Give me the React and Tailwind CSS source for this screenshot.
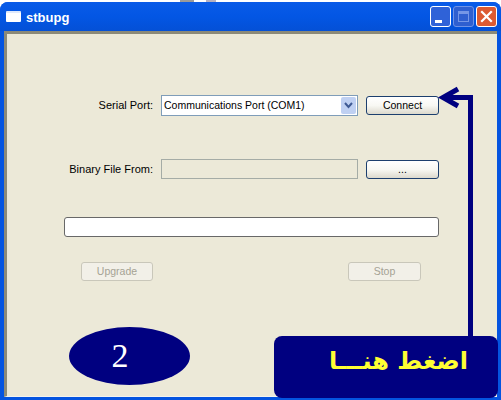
const uiFont = { fontFamily: '"Liberation Sans", sans-serif' }

function XpButton({ children, disabled, className = '' }) {
    return (
        <button
            disabled={disabled}
            className={`h-[19px] rounded-[3px] border text-[10.5px] leading-none ${
                disabled
                    ? 'border-[#c9c7ba] bg-[#f2f0e8] text-[#a5a294]'
                    : 'border-[#1c3f6e] bg-gradient-to-b from-white via-[#f8f8f3] to-[#dcd9cd] text-black'
            } ${className}`}
        >
            {children}
        </button>
    )
}

function CaptionButton({ color, children }) {
    return (
        <div className={`flex h-[21px] w-[21px] items-center justify-center rounded-[3px] border ${color}`}>
            {children}
        </div>
    )
}

export default function App() {
    return (
        <div className="relative h-[400px] w-[501px] overflow-hidden bg-white" style={uiFont}>
            {/* resto del escritorio encima de la ventana */}
            <div className="flex h-[2px] pl-[180px]">
                <div className="h-[2px] w-[14px] bg-[#9a9a9a]" />
                <div className="ml-[12px] h-[2px] w-[10px] bg-[#b5b0c0]" />
            </div>

            <div className="flex h-[398px] flex-col overflow-hidden rounded-t-[8px] bg-[#0454e0]">
                {/* barra de titulo */}
                <div className="flex h-[29px] shrink-0 items-center bg-gradient-to-b from-[#0a5be8] via-[#0356e4] to-[#0450d6] pl-[6px] pr-[4px]">
                    <div className="h-[11px] w-[15px] rounded-[1px] border-t-2 border-[#dfe9fb] bg-white" />
                    <span className="ml-[5px] mt-[2px] text-[13px] font-bold leading-none text-white">
                        stbupg
                    </span>
                    <div className="ml-auto flex gap-[2px]">
                        <CaptionButton color="border-white bg-[#2f62d8]">
                            <div className="mt-[10px] mr-[4px] h-[3px] w-[7px] bg-white" />
                        </CaptionButton>
                        <CaptionButton color="border-[#6f93e6] bg-[#2f5fd0]">
                            <div className="h-[11px] w-[11px] border border-t-[3px] border-[#7596e6]" />
                        </CaptionButton>
                        <CaptionButton color="border-white bg-[#dc5a32]">
                            <svg width="13" height="13" viewBox="0 0 13 13">
                                <path d="M2 2 L11 11 M11 2 L2 11" stroke="#fff" strokeWidth="2.2" strokeLinecap="square" />
                            </svg>
                        </CaptionButton>
                    </div>
                </div>

                {/* area cliente */}
                <div className="ml-[4px] mr-[4px] mb-[3px] flex-1 border-[3px] border-r-0 border-b border-[#8c8a78] border-b-[#f4f3ee] bg-[#ece9d8] text-[11px] text-black">
                    <div className="mt-[61px] flex items-center">
                        <span className="w-[146px] text-right">Serial Port:</span>
                        <div className="ml-[8px] flex h-[21px] w-[197px] items-center border border-[#7f9db9] bg-white pl-[2px] pr-[1px]">
                            <span className="flex-1 whitespace-nowrap text-[10.5px]">Communications Port (COM1)</span>
                            <div className="flex h-[17px] w-[15px] items-center justify-center rounded-[2px] bg-[#bfd0f2]">
                                <svg width="9" height="7" viewBox="0 0 9 7">
                                    <path d="M1 1 L4.5 5 L8 1" fill="none" stroke="#3f5a94" strokeWidth="2" />
                                </svg>
                            </div>
                        </div>
                        <XpButton className="ml-[8px] w-[73px]">Connect</XpButton>
                    </div>

                    <div className="mt-[43px] flex items-center">
                        <span className="w-[146px] text-right">Binary File From:</span>
                        <div className="ml-[8px] h-[20px] w-[197px] border border-[#a5aca6] bg-[#ece9d8]" />
                        <XpButton className="ml-[8px] w-[73px]">...</XpButton>
                    </div>

                    <div className="ml-[57px] mt-[38px] h-[20px] w-[375px] rounded-[3px] border border-[#686868] bg-white" />

                    <div className="ml-[74px] mt-[25px] flex w-[340px] justify-between">
                        <XpButton disabled className="w-[72px]">Upgrade</XpButton>
                        <XpButton disabled className="w-[73px]">Stop</XpButton>
                    </div>
                </div>
            </div>

            {/* anotaciones sobre la captura */}
            <svg className="absolute left-[436px] top-[84px]" width="44" height="256" viewBox="0 0 44 256">
                <path d="M34.5 252 V13.5 H8" fill="none" stroke="#000080" strokeWidth="5" />
                <path d="M22 5 L7 13.5 L22 22" fill="none" stroke="#000080" strokeWidth="5" />
            </svg>

            <div className="absolute left-[69px] top-[327px] flex h-[58px] w-[121px] items-center justify-center rounded-[50%] bg-[#000080] pr-[19px] text-[34px] leading-none text-white" style={{ fontFamily: '"Liberation Serif", serif' }}>
                2
            </div>

            <div className="absolute left-[274px] top-[336px] flex h-[62px] w-[224px] items-start justify-end rounded-[8px] bg-[#000080] pr-[30px] pt-[6px]">
                <span dir="rtl" className="whitespace-nowrap text-[24px] font-bold leading-[38px] text-[#ffff33]" style={{ fontFamily: '"DejaVu Sans", sans-serif' }}>
                    اضغط هنـــا
                </span>
            </div>
        </div>
    )
}
